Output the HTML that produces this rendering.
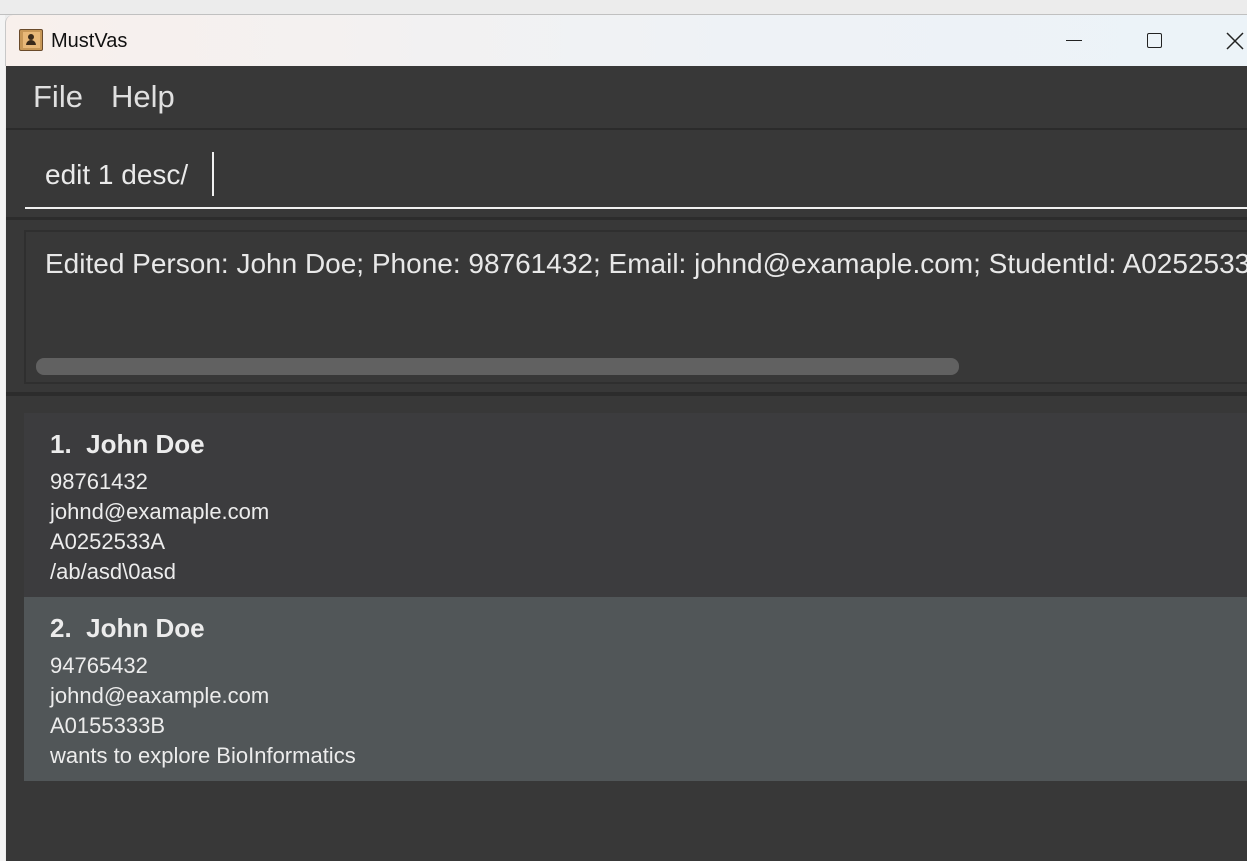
<!DOCTYPE html>
<html><head><style>
*{margin:0;padding:0;box-sizing:border-box}
body{width:1247px;height:861px;overflow:hidden;background:#ececec;font-family:"Liberation Sans","DejaVu Sans",sans-serif;position:relative}
.abs{position:absolute}
</style></head><body>
<div class="abs" style="left:0;top:0;width:1247px;height:15px;background:#ececec;border-bottom:1px solid #c0c0c0"></div>
<div class="abs" style="left:0;top:15px;width:5px;height:846px;background:#f4f4f4"></div>
<div class="abs" style="left:5px;top:15px;width:1242px;height:51px;background:linear-gradient(90deg,#f8f0ec,#eef2f6 60%,#ecf3f8);border-top-left-radius:8px;border-left:1px solid #c8c8c8"></div>
<div class="abs" style="left:19px;top:29px;width:24px;height:22px;background:#c89858;border:1px solid #6a4a2a;border-radius:2px"><div style="position:absolute;left:3px;top:2px;width:17px;height:16px;background:#e8b878"></div><div style="position:absolute;left:8px;top:4px;width:6px;height:6px;border-radius:50%;background:#3a2a1a"></div><div style="position:absolute;left:6px;top:10px;width:10px;height:5px;border-radius:5px 5px 0 0;background:#3a2a1a"></div></div>
<div class="abs" style="left:51px;top:30px;font-size:20px;color:#111">MustVas</div>
<div class="abs" style="left:1066px;top:40px;width:16px;height:1px;background:#222"></div>
<div class="abs" style="left:1147px;top:33px;width:15px;height:15px;border:1.5px solid #222;border-radius:2px"></div>
<svg class="abs" style="left:1226px;top:32px" width="18" height="18"><path d="M1 1L17 17M17 1L1 17" stroke="#222" stroke-width="1.5"/></svg>
<div class="abs" style="left:6px;top:66px;width:1241px;height:795px;background:#383838"></div>
<div class="abs" style="left:33px;top:79px;font-size:31px;color:#e0e0e0">File</div>
<div class="abs" style="left:111px;top:79px;font-size:31px;color:#e0e0e0">Help</div>
<div class="abs" style="left:6px;top:128px;width:1241px;height:2px;background:#2b2b2b"></div>
<div class="abs" style="left:45px;top:159px;font-size:28px;color:#eaeaea">edit 1 desc/</div>
<div class="abs" style="left:212px;top:152px;width:2px;height:44px;background:#f0f0f0"></div>
<div class="abs" style="left:25px;top:207px;width:1222px;height:2px;background:#f0f0f0"></div>
<div class="abs" style="left:6px;top:217px;width:1241px;height:3px;background:#2c2c2c"></div>
<div class="abs" style="left:24px;top:230px;width:1223px;height:154px;border:2px solid #2f2f2f;border-right:none;background:#383838"></div>
<div class="abs" style="left:45px;top:248px;font-size:28px;color:#e8e8e8;white-space:nowrap">Edited Person: John Doe; Phone: 98761432; Email: johnd@examaple.com; StudentId: A0252533A</div>
<div class="abs" style="left:36px;top:358px;width:923px;height:17px;border-radius:8px;background:#616161"></div>
<div class="abs" style="left:6px;top:392px;width:1241px;height:4px;background:#2c2c2c"></div>
<div class="abs" style="left:24px;top:413px;width:1223px;height:184px;background:#3c3c3e"></div>
<div class="abs" style="left:24px;top:597px;width:1223px;height:184px;background:#515658"></div>
<div class="abs" style="left:50px;top:429px;font-size:26px;font-weight:bold;color:#ececec;white-space:pre">1.  John Doe</div>
<div class="abs" style="left:50px;top:467px;font-size:22px;color:#ececec;line-height:30px">98761432<br>johnd@examaple.com<br>A0252533A<br>/ab/asd\0asd</div>
<div class="abs" style="left:50px;top:613px;font-size:26px;font-weight:bold;color:#ececec;white-space:pre">2.  John Doe</div>
<div class="abs" style="left:50px;top:651px;font-size:22px;color:#ececec;line-height:30px">94765432<br>johnd@eaxample.com<br>A0155333B<br>wants to explore BioInformatics</div>
</body></html>
